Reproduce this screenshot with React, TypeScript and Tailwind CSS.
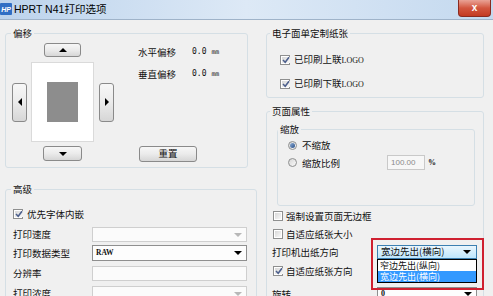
import React from "react";

const Check = ({ checked }: { checked?: boolean }) => (
  <span className="w-[10px] h-[10px] border border-[#8e8f8f] bg-white p-[1px] flex shrink-0">
    <span className="flex-1 bg-linear-to-br from-[#d8d8d8] to-[#f8f8f8] flex items-center justify-center">
      {checked && (
        <svg width="8" height="8" viewBox="0 0 8 8">
          <path d="M1 4 L3.2 6.3 L7 1.2" stroke="#4c5f8c" strokeWidth="1.5" fill="none" />
        </svg>
      )}
    </span>
  </span>
);

const Radio = ({ checked }: { checked?: boolean }) => (
  <span className="w-[9px] h-[9px] rounded-full border border-[#8e8f8f] bg-linear-to-br from-[#d6d6d6] to-[#fafafa] flex items-center justify-center shrink-0">
    {checked && <span className="w-[5px] h-[5px] rounded-full bg-linear-to-br from-[#8fb0d8] to-[#2b4f86]" />}
  </span>
);

const Arrow = ({ dir, light }: { dir: "up" | "down" | "left" | "right"; light?: boolean }) => {
  const c = light ? "#b8b8b8" : "#000";
  const d =
    dir === "up"
      ? "M0 4 L4 0 L8 4 Z"
      : dir === "down"
      ? "M0 0 L8 0 L4 4 Z"
      : dir === "left"
      ? "M4 0 L4 8 L0 4 Z"
      : "M0 0 L4 4 L0 8 Z";
  const w = dir === "up" || dir === "down" ? 8 : 4;
  const h = dir === "up" || dir === "down" ? 4 : 8;
  return (
    <svg width={w} height={h} viewBox={`0 0 ${w} ${h}`}>
      <path d={d} fill={c} />
    </svg>
  );
};

const Btn = ({ className, children }: { className: string; children?: React.ReactNode }) => (
  <div
    className={
      "border border-[#8a8a8a] rounded-[3px] bg-linear-to-b from-[#f7f7f7] via-[#ebebeb] to-[#d6d6d6] flex items-center justify-center shrink-0 " +
      className
    }
  >
    {children}
  </div>
);

const Combo = ({
  className,
  text,
  enabled,
  arrow = true,
  textClass = "",
}: {
  className: string;
  text?: string;
  enabled?: boolean;
  arrow?: boolean;
  textClass?: string;
}) => (
  <div
    className={
      "border flex items-center shrink-0 pl-[3px] pr-[4px] " +
      (enabled ? "border-[#8f8f8f] bg-[#fdfdfd] " : "border-[#cfcfcf] bg-[#fbfbfb] ") +
      className
    }
  >
    <span className={"flex-1 leading-none " + textClass}>{text}</span>
    {arrow && <Arrow dir="down" light={!enabled} />}
  </div>
);

const Legend = ({ children, className = "" }: { children: React.ReactNode; className?: string }) => (
  <legend className={"leading-[12px] px-[2px] text-[9.5px] text-[#111] " + className}>{children}</legend>
);

export default function App() {
  return (
    <div className="w-[493px] h-[296px] overflow-hidden bg-[#f0f0f0] text-[#111] text-[9.5px] font-[family-name:'Noto_Sans_CJK_SC','Noto_Sans',sans-serif]">
      {/* Title bar */}
      <div className="h-[20px] flex items-start bg-linear-to-r from-[#bcd3ec] via-[#dde9f6] to-[#c4d9ef] border-b border-[#9fb3c9]">
        <div className="mt-[3px] w-[12px] h-[12px] bg-[#2f6ec4] rounded-[1px] flex items-center justify-center text-white text-[7px] font-bold italic leading-none font-[family-name:'Liberation_Sans',sans-serif]">
          HP
        </div>
        <div className="ml-[2px] mt-[2px] text-[10.5px] leading-[14px] text-black">
          <span className="font-[family-name:'Liberation_Sans',sans-serif]">HPRT N41</span>打印选项
        </div>
        <div className="ml-auto mr-[2px] w-[33px] h-[17px] rounded-b-[4px] border border-[#8a2a20] border-t-0 bg-linear-to-b from-[#e9a296] via-[#d2563f] to-[#c33a22] flex items-center justify-center text-white text-[10px] font-bold leading-none font-[family-name:'Liberation_Sans',sans-serif]">
          x
        </div>
      </div>

      <div className="flex">
        {/* Left column */}
        <div className="ml-[5px] w-[243px] flex flex-col">
          <fieldset className="mt-[7px] h-[141px] border border-[#d5dfe5] rounded-[3px]">
            <Legend className="ml-[5px]">偏移</Legend>
            <div className="flex">
              <div className="ml-[6px] flex flex-col">
                <Btn className="mt-[4px] ml-[32px] w-[37px] h-[14px]">
                  <Arrow dir="up" />
                </Btn>
                <div className="mt-[5px] flex items-center">
                  <Btn className="w-[15px] h-[39px]">
                    <Arrow dir="left" />
                  </Btn>
                  <div className="ml-[4px] w-[63px] h-[80px] bg-white border border-[#dadada] flex items-center justify-center">
                    <div className="w-[31px] h-[40px] bg-[#8d8d8d]" />
                  </div>
                  <Btn className="ml-[5px] w-[15px] h-[39px]">
                    <Arrow dir="right" />
                  </Btn>
                </div>
                <Btn className="mt-[4px] ml-[31px] w-[39px] h-[15px]">
                  <Arrow dir="down" />
                </Btn>
              </div>
              <div className="ml-[24px] flex flex-col">
                <div className="mt-[7px] flex items-center leading-[12px]">
                  <span className="w-[54px]">水平偏移</span>
                  <span className="text-[8px] font-[family-name:'DejaVu_Sans_Mono',monospace]">0.0</span>
                  <span className="ml-[5px] text-[6.5px] font-[family-name:'DejaVu_Sans_Mono',monospace]">mm</span>
                </div>
                <div className="mt-[10px] flex items-center leading-[12px]">
                  <span className="w-[54px]">垂直偏移</span>
                  <span className="text-[8px] font-[family-name:'DejaVu_Sans_Mono',monospace]">0.0</span>
                  <span className="ml-[5px] text-[6.5px] font-[family-name:'DejaVu_Sans_Mono',monospace]">mm</span>
                </div>
                <Btn className="mt-[66px] ml-[1px] w-[58px] h-[16px]">
                  <span className="leading-none">重置</span>
                </Btn>
              </div>
            </div>
          </fieldset>

          <fieldset className="mt-[15px] h-[200px] border border-[#d5dfe5] rounded-[3px] mr-[-9px]">
            <Legend className="ml-[5px]">高级</Legend>
            <div className="pl-[7px] flex flex-col">
              <div className="mt-[13px] flex items-center gap-[4px] leading-[12px]">
                <Check checked />
                <span>优先字体内嵌</span>
              </div>
              <div className="mt-[7px] flex items-center">
                <span className="w-[79px]">打印速度</span>
                <Combo className="w-[155px] h-[15px]" />
              </div>
              <div className="mt-[3px] flex items-center">
                <span className="w-[79px]">打印数据类型</span>
                <Combo
                  className="w-[155px] h-[16px]"
                  enabled
                  text="RAW"
                  textClass="text-[7.5px] font-bold font-[family-name:'Liberation_Serif',serif]"
                />
              </div>
              <div className="mt-[5px] flex items-center">
                <span className="w-[79px]">分辨率</span>
                <Combo className="w-[155px] h-[15px]" arrow={false} />
              </div>
              <div className="mt-[5px] flex items-center">
                <span className="w-[79px]">打印浓度</span>
                <Combo className="w-[155px] h-[15px]" />
              </div>
            </div>
          </fieldset>
        </div>

        {/* Right column */}
        <div className="ml-[18px] w-[218px] flex flex-col">
          <fieldset className="mt-[7px] h-[71px] border border-[#d5dfe5] rounded-[3px]">
            <Legend className="ml-[3px]">电子面单定制纸张</Legend>
            <div className="pl-[13px] flex flex-col">
              <div className="mt-[14px] flex items-center gap-[4px] leading-[12px]">
                <Check checked />
                <span>
                  已印刷上联<span className="text-[8px] font-[family-name:'Liberation_Serif',serif]">LOGO</span>
                </span>
              </div>
              <div className="mt-[10px] flex items-center gap-[4px] leading-[12px]">
                <Check checked />
                <span>
                  已印刷下联<span className="text-[8px] font-[family-name:'Liberation_Serif',serif]">LOGO</span>
                </span>
              </div>
            </div>
          </fieldset>

          <fieldset className="mt-[7px] h-[220px] border border-[#d5dfe5] rounded-[3px]">
            <Legend className="ml-[3px]">页面属性</Legend>
            <fieldset className="ml-[10px] mt-[6px] w-[198px] h-[83px] border border-[#d5dfe5] rounded-[3px]">
              <Legend className="ml-[0px] px-[1px]">缩放</Legend>
              <div className="pl-[10px] flex flex-col">
                <div className="mt-[4px] flex items-center gap-[5px] leading-[12px]">
                  <Radio checked />
                  <span>不缩放</span>
                </div>
                <div className="mt-[4px] flex items-center gap-[5px] leading-[12px]">
                  <Radio />
                  <span className="w-[80px]">缩放比例</span>
                  <div className="w-[38px] h-[15px] border border-[#c9c9c9] bg-[#f7f7f7] flex items-center pl-[3px] text-[8px] text-[#8a8a8a] font-[family-name:'Liberation_Sans',sans-serif]">
                    100.00
                  </div>
                  <span className="ml-[-2px] text-[8px] font-bold font-[family-name:'Liberation_Serif',serif]">%</span>
                </div>
              </div>
            </fieldset>
            <div className="flex flex-col">
              <div className="mt-[4px] pl-[6px] flex items-center gap-[3px] leading-[12px]">
                <Check />
                <span>强制设置页面无边框</span>
              </div>
              <div className="mt-[6px] pl-[6px] flex items-center gap-[3px] leading-[12px]">
                <Check />
                <span>自适应纸张大小</span>
              </div>
              <div className="mt-[5px] pl-[5px] flex items-center">
                <span className="w-[105px]">打印机出纸方向</span>
                <div className="relative">
                  <div className="w-[100px] h-[14px] border border-[#3c7fb1] bg-linear-to-b from-[#eaf6fd] to-[#bee6fd] flex items-center pl-[3px] pr-[5px]">
                    <span className="flex-1 leading-none">宽边先出(横向)</span>
                    <Arrow dir="down" />
                  </div>
                  <div className="absolute left-0 top-full w-[100px] border border-black bg-white flex flex-col text-[9px]">
                    <div className="pl-[2px] h-[11px] leading-[11px]">窄边先出(纵向)</div>
                    <div className="pl-[2px] h-[11px] leading-[11px] bg-[#3399ff] text-white">宽边先出(横向)</div>
                  </div>
                  <div className="absolute left-[-6px] top-[-7px] w-[113px] h-[52px] border-2 border-[#cf2030]" />
                </div>
              </div>
              <div className="mt-[6px] pl-[6px] flex items-center gap-[3px] leading-[12px]">
                <Check checked />
                <span>自适应纸张方向</span>
              </div>
              <div className="mt-[10px] pl-[5px] flex items-center">
                <span className="w-[105px]">旋转</span>
                <Combo
                  className="w-[100px] h-[14px]"
                  enabled
                  text="0"
                  textClass="text-[8px] font-bold font-[family-name:'Liberation_Serif',serif]"
                />
              </div>
            </div>
          </fieldset>
        </div>
      </div>
    </div>
  );
}
